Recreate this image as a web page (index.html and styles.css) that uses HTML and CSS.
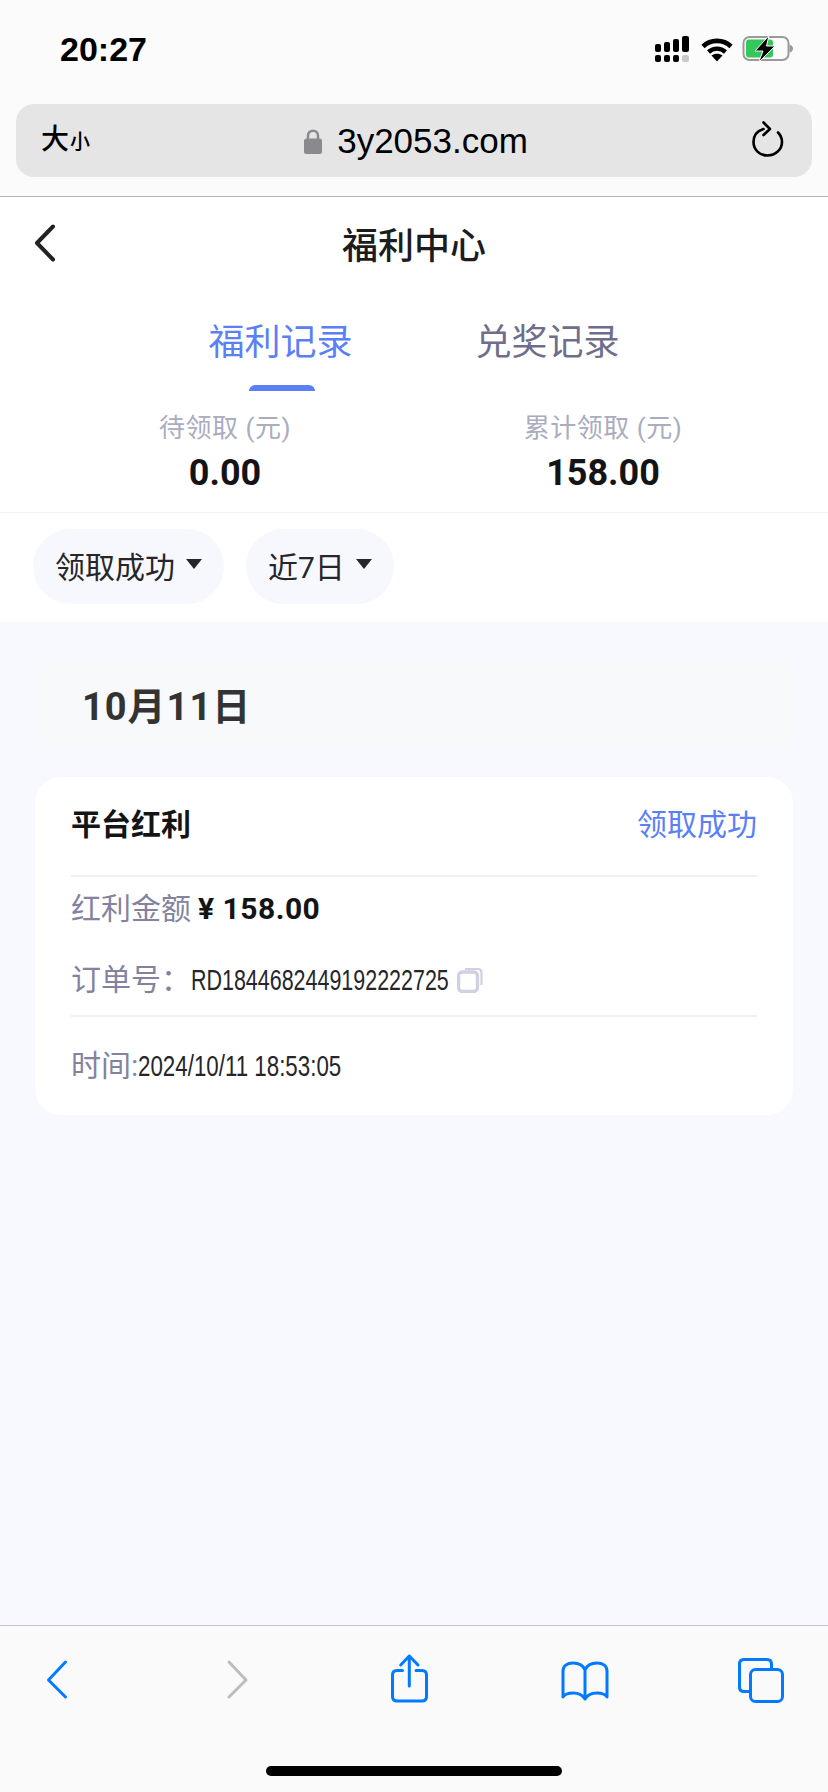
FILE: index.html
```html
<!DOCTYPE html>
<html lang="zh-CN">
<head>
    <meta charset="UTF-8">
    <meta name="viewport" content="width=device-width, initial-scale=1.0">
    <title>福利中心</title>
    <link rel="stylesheet" href="styles.css">
</head>
<body>
    <div class="screen">
        <div class="browser-top">
            <div class="status-bar">
                <span class="clock">20:27</span>
                <div class="status-icons">
                    <svg class="signal" width="34" height="28" viewBox="0 0 34 28">
                        <rect x="0" y="9" width="6" height="8" rx="2"/>
                        <rect x="9" y="7" width="6" height="10" rx="2"/>
                        <rect x="18" y="4" width="6" height="13" rx="2"/>
                        <rect x="27" y="1" width="7" height="16" rx="2"/>
                        <rect x="0" y="20" width="6" height="7" rx="2"/>
                        <rect x="9" y="20" width="6" height="7" rx="2"/>
                        <rect x="18" y="20" width="6" height="7" rx="2"/>
                        <rect x="27" y="20" width="7" height="7" rx="2" fill="#c8c8c8"/>
                    </svg>
                    <svg class="wifi" width="32" height="25" viewBox="0 0 32 25">
                        <path d="M2 9.500C9.500 2 22.500 2 30 9.500" fill="none" stroke="#000" stroke-width="4.600"/>
                        <path d="M7.500 15C12.500 10.500 19.500 10.500 24.500 15" fill="none" stroke="#000" stroke-width="4.400"/>
                        <path d="M10.500 18.500C14 16 18 16 21.500 18.500L16 24.500Z"/>
                    </svg>
                    <svg class="battery" width="52" height="28" viewBox="0 0 52 28">
                        <rect x="1.500" y="2" width="45" height="23" rx="6" fill="none" stroke="#9a9a9a" stroke-width="2"/>
                        <rect x="4" y="4.500" width="27" height="18" rx="3" fill="#34c759"/>
                        <path d="M47.500 9.500C50 10 51 12 51 13.500C51 15 50 17 47.500 17.500Z" fill="#9a9a9a"/>
                        <path d="M27 0.500L13 16H21L16.500 27.500L33 11H24.500Z" stroke="#fbfbfb" stroke-width="1"/>
                    </svg>
                </div>
            </div>
            <div class="url-bar">
                <span class="text-size">大<small>小</small></span>
                <div class="address">
                    <svg width="18" height="26" viewBox="0 0 18 26">
                        <path d="M4 12V7.500C4 1 14 1 14 7.500V12" fill="none" stroke="#8a8a8e" stroke-width="2.500"/>
                        <rect x="0" y="10.500" width="18" height="15.500" rx="2.500" fill="#8a8a8e"/>
                    </svg>
                    <span>3y2053.com</span>
                </div>
                <svg class="reload" width="32" height="36" viewBox="0 0 32 36">
                    <path d="M11.500 8C5 10 1.500 15 1.500 21C1.500 28.500 7.500 34.500 15.500 34.500C23.500 34.500 30 28.500 30 21C30 17 28.500 14 26 11.500" fill="none" stroke="#000" stroke-width="2.600" stroke-linecap="round"/>
                    <path d="M11.500 1.500L18 8L11.500 14" fill="none" stroke="#000" stroke-width="2.600" stroke-linecap="round" stroke-linejoin="round"/>
                </svg>
            </div>
        </div>

        <div class="panel">
            <div class="nav">
                <svg class="nav-back" width="22" height="38" viewBox="0 0 22 38">
                    <path d="M19 2.500L3 19L19 35.500" fill="none" stroke="#222" stroke-width="4" stroke-linecap="round" stroke-linejoin="round"/>
                </svg>
                <h1>福利中心</h1>
            </div>
            <div class="tabs">
                <div class="tab active">福利记录</div>
                <div class="tab">兑奖记录</div>
            </div>
            <div class="stats">
                <div class="stat">
                    <div class="stat-label">待领取 (元)</div>
                    <div class="stat-value">0.00</div>
                </div>
                <div class="stat">
                    <div class="stat-label">累计领取 (元)</div>
                    <div class="stat-value">158.00</div>
                </div>
            </div>
            <div class="filters">
                <div class="pill">领取成功<i class="caret"></i></div>
                <div class="pill">近7日<i class="caret"></i></div>
            </div>
        </div>

        <div class="content">
            <div class="date">10月11日</div>
            <div class="card">
                <div class="card-head">
                    <span class="card-title">平台红利</span>
                    <span class="card-status">领取成功</span>
                </div>
                <div class="amount-row">
                    <span class="muted">红利金额</span>
                    <b class="amount">¥ 158.00</b>
                </div>
                <div class="order-row">
                    <span class="muted order-label">订单号：</span>
                    <span class="narrow order-no">RD1844682449192222725</span>
                    <svg class="copy" width="26" height="26" viewBox="0 0 26 26">
                        <path d="M8 2H21C23 2 24.500 3.500 24.500 5.500V18" fill="none" stroke="#cfd1e0" stroke-width="2.200"/>
                        <rect x="1.500" y="5" width="19" height="19.500" rx="4" fill="none" stroke="#cfd1e0" stroke-width="3.400"/>
                    </svg>
                </div>
                <div class="time-row">
                    <span class="muted">时间:</span><span class="narrow time-val">2024/10/11 18:53:05</span>
                </div>
            </div>
        </div>

        <div class="toolbar">
            <svg class="tool" width="60" height="60" viewBox="0 0 60 60">
                <path d="M38.500 12L21.500 30L38.500 47" stroke="#007aff"/>
            </svg>
            <svg class="tool" width="60" height="60" viewBox="0 0 60 60">
                <path d="M26 12L43 30L26 47" stroke="#bdbdbd"/>
            </svg>
            <svg class="tool" width="60" height="60" viewBox="0 0 60 60">
                <path d="M23.500 20.500H18C15 20.500 13.500 22 13.500 25V46.500C13.500 49.500 15 51 18 51H43C46 51 47.500 49.500 47.500 46.500V25C47.500 22 46 20.500 43 20.500H37" stroke="#007aff"/>
                <path d="M30.300 36V6M21.700 15L30.300 6L39 15" stroke="#007aff"/>
            </svg>
            <svg class="tool" width="60" height="60" viewBox="0 0 60 60">
                <path d="M30 49C27 44 22 43 18 43C14 43 10 44 8 47V21C8 16 12 13 18 13C23 13 28 15 30 20C32 15 37 13 42 13C48 13 52 16 52 21V47C50 44 46 43 42 43C38 43 33 44 30 49ZM30 20V49" stroke="#007aff"/>
            </svg>
            <svg class="tool" width="60" height="60" viewBox="0 0 60 60">
                <path d="M18.500 41.500H13C10 41.500 8.500 40 8.500 37V14C8.500 11 10 9.500 13 9.500H36C39 9.500 40.500 11 40.500 14V19" stroke="#007aff"/>
                <rect x="19.500" y="19.500" width="32" height="32" rx="5" stroke="#007aff"/>
            </svg>
            <div class="home-bar"></div>
        </div>
    </div>
</body>
</html>
```

FILE: styles.css
```css
* {
    box-sizing: border-box;
}

body {
    margin: 0;
    font-family: Roboto, "Noto Sans CJK SC", sans-serif;
    background-color: #f8f9fe;
}

.screen {
    display: flex;
    flex-direction: column;
    width: 828px;
    height: 1792px;
    overflow: hidden;
}

/* browser chrome, top */
.browser-top {
    height: 197px;
    padding: 0 16px;
    background-color: #fbfbfb;
    border-bottom: 1px solid #b4b4b4;
}

.status-bar {
    display: flex;
    justify-content: space-between;
    align-items: center;
    height: 98px;
    padding: 0 18px 0 44px;
}

.clock {
    font-family: "Liberation Sans", sans-serif;
    font-size: 34px;
    font-weight: 700;
    color: #000;
}

.status-icons {
    display: flex;
    align-items: center;
    gap: 12px;
}

.wifi {
    margin-right: -3px;
}

.url-bar {
    display: flex;
    justify-content: space-between;
    align-items: center;
    height: 73px;
    margin-top: 6px;
    padding: 0 28px 0 25px;
    background-color: #e5e5e6;
    border-radius: 18px;
}

.text-size {
    font-size: 28px;
    font-weight: 500;
    line-height: 36px;
    color: #000;
}

.text-size small {
    font-size: 20px;
    margin-left: 1px;
}

.address {
    display: flex;
    align-items: center;
    gap: 15px;
    font-family: "Liberation Sans", sans-serif;
    font-size: 35px;
    color: #000;
    margin-left: -10px;
}

.reload {
    margin-top: -3px;
}

/* white panel */
.panel {
    background-color: #fff;
}

.nav {
    display: flex;
    justify-content: center;
    align-items: center;
    position: relative;
    height: 92px;
}

.nav-back {
    position: absolute;
    left: 34px;
    top: 27px;
}

h1 {
    margin: 0;
    font-size: 36px;
    font-weight: 500;
    color: #1c1c1e;
}

.tabs {
    display: flex;
    justify-content: center;
    gap: 123px;
    padding-top: 29px;
}

.tab {
    font-size: 36px;
    line-height: 50px;
    color: #6e6e8c;
}

.tab::after {
    content: "";
    display: block;
    width: 66px;
    height: 6px;
    margin: 17px 0 0 41px;
    border-radius: 6px 6px 0 0;
}

.tab.active {
    color: #5b80f6;
}

.tab.active::after {
    background-color: #5b80f6;
}

.stats {
    display: grid;
    grid-template-columns: 1fr 1fr;
    padding: 19px 36px 15px;
    border-bottom: 1px solid #f3f3f5;
    text-align: center;
}

.stat-label {
    font-size: 26px;
    line-height: 36px;
    letter-spacing: 0.5px;
    color: #aaacbf;
}

.stat-value {
    margin-top: 3px;
    font-size: 36px;
    line-height: 48px;
    font-weight: 700;
    color: #141416;
}

.filters {
    display: flex;
    gap: 22px;
    padding: 16px 33px 18px;
}

.pill {
    display: flex;
    align-items: center;
    gap: 11px;
    height: 75px;
    padding: 0 22px 3px 22px;
    font-size: 30px;
    color: #26262a;
    background-color: #f7f8fd;
    border-radius: 38px;
}

.caret {
    width: 0;
    height: 0;
    margin-top: -3px;
    border-left: 8px solid transparent;
    border-right: 8px solid transparent;
    border-top: 10px solid #26262a;
}

/* list */
.content {
    flex: 1;
    padding: 38px 35px 0;
    background-color: #f8f9fe;
}

.date {
    height: 88px;
    padding-left: 47px;
    font-size: 38px;
    line-height: 94px;
    font-weight: 700;
    letter-spacing: 1px;
    color: #333;
    background-color: #f8f9fb;
}

.card {
    height: 338px;
    margin-top: 29px;
    padding: 0 36px;
    background-color: #fff;
    border-radius: 26px;
}

.card-head {
    display: flex;
    justify-content: space-between;
    align-items: center;
    height: 100px;
    padding-bottom: 8px;
    border-bottom: 2px solid #f0f0f2;
}

.card-title {
    font-size: 30px;
    font-weight: 700;
    color: #141416;
}

.card-status {
    font-size: 30px;
    color: #5b80f6;
}

.muted {
    color: #83839f;
}

.amount-row,
.order-row,
.time-row {
    display: flex;
    align-items: center;
    font-size: 30px;
    line-height: 40px;
}

.amount-row {
    padding-top: 12px;
}

.amount {
    margin-left: 7px;
    letter-spacing: 0.5px;
    color: #141416;
}

.order-row {
    margin-top: 31px;
    padding-bottom: 15px;
    border-bottom: 2px solid #f0f0f2;
}

/* the reference digits are a condensed face, none installed */
.narrow {
    display: block;
    font-family: "Liberation Sans", sans-serif;
    font-size: 29px;
    white-space: nowrap;
    color: #26262a;
    transform-origin: left center;
}

.order-label {
    width: 120px;
}

.order-no {
    width: 257px;
    transform: scaleX(0.74);
}

.copy {
    margin-left: 9px;
}

.time-row {
    padding-top: 29px;
}

.time-val {
    width: 202px;
    transform: scaleX(0.77);
}

/* browser chrome, bottom */
.toolbar {
    display: flex;
    justify-content: space-between;
    align-items: flex-start;
    position: relative;
    height: 167px;
    padding: 24px 37px 0 27px;
    background-color: #fafafa;
    border-top: 1px solid #c4c4c8;
}

.tool {
    fill: none;
    stroke-width: 3;
    stroke-linecap: round;
    stroke-linejoin: round;
}

.home-bar {
    position: absolute;
    left: 266px;
    top: 140px;
    width: 296px;
    height: 10px;
    background-color: #000;
    border-radius: 5px;
}
```
